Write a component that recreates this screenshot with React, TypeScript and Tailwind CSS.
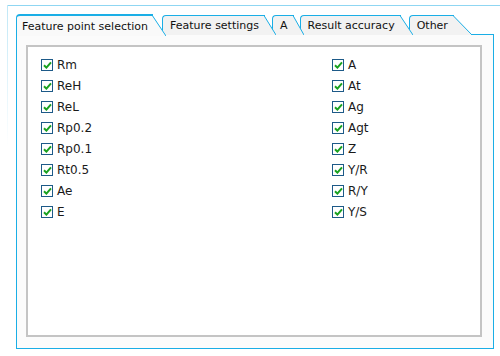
import React from 'react';

interface Tab {
  label: string;
  slant: number;
}

const tabs: Tab[] = [
  { label: 'Feature point selection', slant: 14 },
  { label: 'Feature settings', slant: 12 },
  { label: 'A', slant: 11 },
  { label: 'Result accuracy', slant: 13 },
  { label: 'Other', slant: 19 },
];

const leftItems = ['Rm', 'ReH', 'ReL', 'Rp0.2', 'Rp0.1', 'Rt0.5', 'Ae', 'E'];
const rightItems = ['A', 'At', 'Ag', 'Agt', 'Z', 'Y/R', 'R/Y', 'Y/S'];

const CheckItem: React.FC<{ label: string }> = ({ label }) => (
  <div className="flex items-center h-[21px] gap-[4px]">
    <div className="w-[12px] h-[12px] border border-[#1d5a88] bg-white flex items-center justify-center">
      <svg width="9" height="8" viewBox="0 0 9 8">
        <path d="M1 4.2 L3.4 6.6 L8 1.4" fill="none" stroke="#19a11f" strokeWidth="2" />
      </svg>
    </div>
    <span className="text-[12px] leading-none text-[#1a1a1a]">{label}</span>
  </div>
);

const TabItem: React.FC<{ tab: Tab; active: boolean; index: number }> = ({ tab, active, index }) => {
  const h = active ? 22 : 20;
  const bg = active ? '#f9f9f9' : '#f2f2f2';
  return (
    <div
      className={`flex items-stretch ${index > 0 ? '-ml-[4px]' : ''} ${active ? 'h-[22px] mb-[-1px]' : 'h-[20px]'}`}
      style={{ zIndex: 10 - index }}
    >
      <div
        className={`flex items-center rounded-tl-[4px] border-l border-[#1aaee6] ${
          active ? 'border-t-2 bg-[#f9f9f9] pl-[5px] pr-[4px]' : 'border-t bg-[#f2f2f2] pl-[7px] pr-[5px]'
        }`}
      >
        <span className="text-[11px] leading-none text-[#111] whitespace-nowrap">{tab.label}</span>
      </div>
      <svg width={tab.slant} height={h} className="block shrink-0">
        <polygon points={`0,0 0,${h} ${tab.slant},${h}`} fill={bg} />
        <line
          x1="0"
          y1={active ? 1 : 0.5}
          x2={tab.slant}
          y2={h}
          stroke="#1aaee6"
          strokeWidth="1"
        />
        <line x1="0" y1={active ? 1 : 0.5} x2="1" y2={active ? 1 : 0.5} stroke="#1aaee6" strokeWidth={active ? 2 : 1} />
      </svg>
    </div>
  );
};

const App: React.FC = () => {
  return (
    <div
      className="w-[500px] h-[356px] bg-white relative overflow-hidden"
      style={{ fontFamily: '"DejaVu Sans", Verdana, sans-serif' }}
    >
      {/* faint outer frame */}
      <div className="absolute left-[7px] top-[5px] w-[1px] h-[142px] bg-gradient-to-b from-[#bfe7f6] to-white" />
      <div className="ml-[7px] mt-[5px] border-t border-[#8fd6f2] pl-[9px] pt-[8px]">
        <div className="flex items-end relative h-[21px]">
          {tabs.map((t, i) => (
            <TabItem key={t.label} tab={t} active={i === 0} index={i} />
          ))}
        </div>
        <div className="w-[478px] h-[315px] border border-[#1aaee6] bg-[#fbfbfb] pt-[10px] pl-[9px] pr-[11px] pb-[11px] -mt-[1px]">
          <div className="h-full border-2 border-[#c4c4c4] bg-white pt-[7px] pl-[13px]">
            <div className="grid grid-cols-[291px_1fr]">
              <div className="flex flex-col">
                {leftItems.map((l) => (
                  <CheckItem key={l} label={l} />
                ))}
              </div>
              <div className="flex flex-col">
                {rightItems.map((l) => (
                  <CheckItem key={l} label={l} />
                ))}
              </div>
            </div>
          </div>
        </div>
      </div>
    </div>
  );
};

export default App;
